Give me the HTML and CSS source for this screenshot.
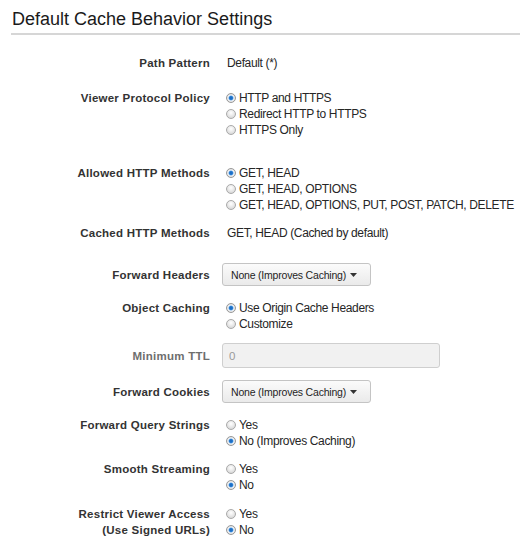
FILE: index.html
```html
<!DOCTYPE html>
<html lang="en">
<head>
<meta charset="utf-8">
<title>Default Cache Behavior Settings</title>
<link rel="stylesheet" href="styles.css">
</head>
<body>
<div class="page">
  <h1 class="title">Default Cache Behavior Settings</h1>
  <div class="form">
    <div class="row">
      <div class="label">Path Pattern</div>
      <div class="value text">Default (*)</div>
    </div>

    <div class="row mt-19">
      <div class="label">Viewer Protocol Policy</div>
      <div class="value options">
        <div class="opt"><span class="radio on"></span>HTTP and HTTPS</div>
        <div class="opt"><span class="radio"></span>Redirect HTTP to HTTPS</div>
        <div class="opt"><span class="radio"></span>HTTPS Only</div>
      </div>
    </div>

    <div class="row mt-27">
      <div class="label">Allowed HTTP Methods</div>
      <div class="value options">
        <div class="opt"><span class="radio on"></span>GET, HEAD</div>
        <div class="opt"><span class="radio"></span>GET, HEAD, OPTIONS</div>
        <div class="opt"><span class="radio"></span>GET, HEAD, OPTIONS, PUT, POST, PATCH, DELETE</div>
      </div>
    </div>

    <div class="row">
      <div class="label">Cached HTTP Methods</div>
      <div class="value text">GET, HEAD (Cached by default)</div>
    </div>

    <div class="row row--center mt-22">
      <div class="label">Forward Headers</div>
      <div class="value">
        <div class="select">None (Improves Caching)<svg class="caret" width="7" height="4" viewBox="0 0 7 4"><path d="M0 0H7L3.5 4Z" fill="#333"/></svg></div>
      </div>
    </div>

    <div class="row mt-14">
      <div class="label">Object Caching</div>
      <div class="value options">
        <div class="opt"><span class="radio on"></span>Use Origin Cache Headers</div>
        <div class="opt"><span class="radio"></span>Customize</div>
      </div>
    </div>

    <div class="row row--center mt-11">
      <div class="label label--muted">Minimum TTL</div>
      <div class="value">
        <div class="input">0</div>
      </div>
    </div>

    <div class="row row--center">
      <div class="label">Forward Cookies</div>
      <div class="value">
        <div class="select">None (Improves Caching)<svg class="caret" width="7" height="4" viewBox="0 0 7 4"><path d="M0 0H7L3.5 4Z" fill="#333"/></svg></div>
      </div>
    </div>

    <div class="row mt-14">
      <div class="label">Forward Query Strings</div>
      <div class="value options">
        <div class="opt"><span class="radio"></span>Yes</div>
        <div class="opt"><span class="radio on"></span>No (Improves Caching)</div>
      </div>
    </div>

    <div class="row">
      <div class="label">Smooth Streaming</div>
      <div class="value options">
        <div class="opt"><span class="radio"></span>Yes</div>
        <div class="opt"><span class="radio on"></span>No</div>
      </div>
    </div>

    <div class="row mt-13">
      <div class="label">Restrict Viewer Access<br>(Use Signed URLs)</div>
      <div class="value options">
        <div class="opt"><span class="radio"></span>Yes</div>
        <div class="opt"><span class="radio on"></span>No</div>
      </div>
    </div>
  </div>
</div>
</body>
</html>
```

FILE: styles.css
```css
html, body {
  margin: 0;
  padding: 0;
  background: #ffffff;
}

body {
  font-family: "Liberation Sans", Arial, sans-serif;
  color: #333;
}

.page {
  width: 520px;
}

.title {
  margin: 0 0 0 11px;
  padding: 8px 0 3px 1px;
  font-size: 18px;
  line-height: 22px;
  font-weight: normal;
  color: #1a1a1a;
  border-bottom: 2px solid #d6d6d6;
}

.form {
  display: flex;
  flex-direction: column;
  gap: 12px;
  margin-top: 20px;
}

.row {
  display: grid;
  grid-template-columns: 210px 1fr;
  column-gap: 12px;
  align-items: start;
}

.row--center {
  align-items: center;
}

.mt-11 { margin-top: -1px; }
.mt-13 { margin-top: 1px; }
.mt-14 { margin-top: 2px; }
.mt-19 { margin-top: 7px; }
.mt-22 { margin-top: 10px; }
.mt-27 { margin-top: 15px; }

.label {
  text-align: right;
  font-size: 11.5px;
  line-height: 16px;
  letter-spacing: 0.25px;
  font-weight: bold;
  color: #333;
}

.label--muted {
  color: #6e6e6e;
}

.value {
  font-size: 12px;
  line-height: 16px;
  letter-spacing: -0.35px;
  color: #262626;
}

.text {
  padding-left: 5px;
}

.options {
  display: flex;
  flex-direction: column;
  padding-left: 5px;
}

.opt {
  display: flex;
  align-items: center;
  white-space: nowrap;
}

.radio {
  flex: none;
  width: 10px;
  height: 10px;
  margin-right: 3px;
  margin-left: -1px;
  box-sizing: border-box;
  border-radius: 50%;
  border: 1px solid #a9a9a9;
  background: radial-gradient(circle at 50% 35%, #ffffff 0, #efefef 35%, #cdcdcd 100%);
}

.radio.on {
  border-color: #999;
  background: radial-gradient(circle, #1762b8 0, #2a80d6 1.8px, #e8f0f8 2.8px, #eaeaea 60%, #c8c8c8 100%);
}

.select {
  display: inline-flex;
  align-items: center;
  box-sizing: border-box;
  height: 23px;
  width: 149px;
  padding: 0 8px 0 8px;
  font-size: 10.5px;
  letter-spacing: -0.2px;
  color: #1e1e1e;
  border: 1px solid #c4c4c4;
  border-radius: 3px;
  background: linear-gradient(#fbfbfb, #eaeaea);
  white-space: nowrap;
}

.caret {
  margin-left: 4px;
}

.input {
  box-sizing: border-box;
  width: 218px;
  height: 25px;
  padding: 0 6px;
  display: flex;
  align-items: center;
  font-size: 11.5px;
  color: #9a9a9a;
  border: 1px solid #cfcfcf;
  border-radius: 3px;
  background: #f1f1f1;
}
```
